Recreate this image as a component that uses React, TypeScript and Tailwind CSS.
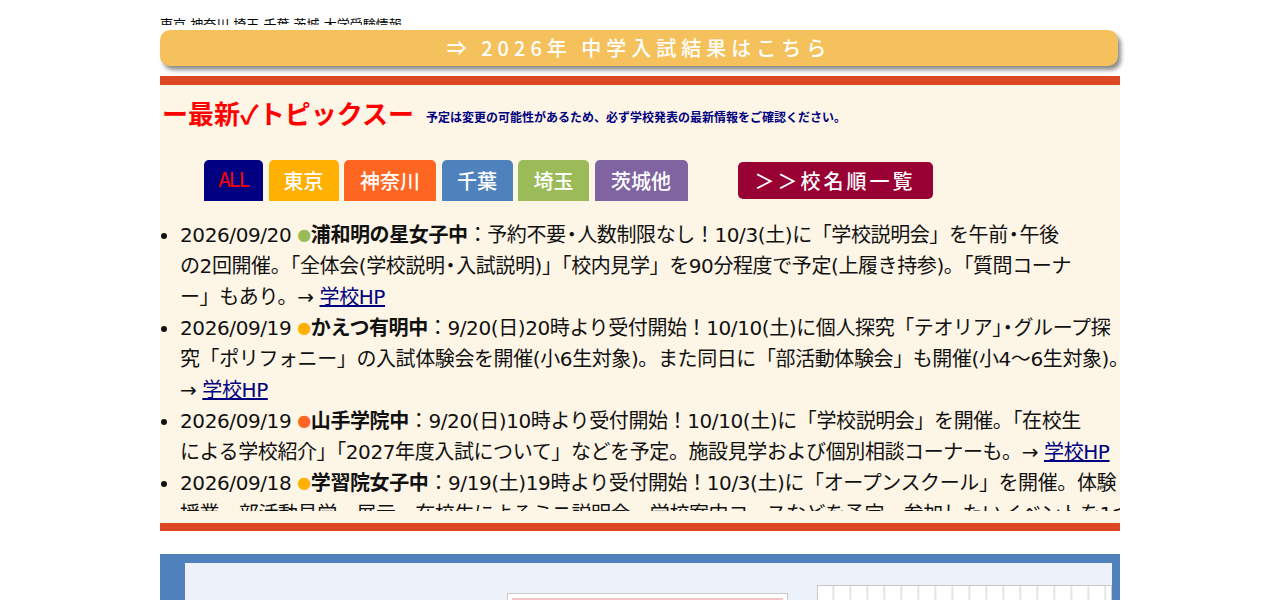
import { Fragment } from "react"

const jp = "font-['Noto_Sans_CJK_JP','Noto_Sans',sans-serif]"
const mixed = "font-['DejaVu_Sans','Noto_Sans_CJK_JP',sans-serif]"

const areas = [
  { label: "ALL", w: "w-[59px]", bg: "bg-[#000080]", text: "text-[#ff0000] font-['Liberation_Mono',monospace] scale-y-110 tracking-[-2px]" },
  { label: "東京", w: "w-[70px]", bg: "bg-[#ffb000]", text: "text-white" },
  { label: "神奈川", w: "w-[92px]", bg: "bg-[#ff6622]", text: "text-white" },
  { label: "千葉", w: "w-[71px]", bg: "bg-[#4f81bd]", text: "text-white" },
  { label: "埼玉", w: "w-[71px]", bg: "bg-[#9bbb59]", text: "text-white" },
  { label: "茨城他", w: "w-[93px]", bg: "bg-[#8064a2]", text: "text-white" },
]

// "\n" marks where the line breaks in the original page
const topics = [
  {
    date: "2026/09/20",
    dot: "text-[#9bbb59]",
    school: "浦和明の星女子中",
    body: "予約不要・人数制限なし！10/3(土)に「学校説明会」を午前・午後\nの2回開催。「全体会(学校説明・入試説明)」「校内見学」を90分程度で予定(上履き持参)。「質問コーナ\nー」もあり。",
  },
  {
    date: "2026/09/19",
    dot: "text-[#ffb000]",
    school: "かえつ有明中",
    body: "9/20(日)20時より受付開始！10/10(土)に個人探究「テオリア」・グループ探\n究「ポリフォニー」の入試体験会を開催(小6生対象)。また同日に「部活動体験会」も開催(小4～6生対象)。\n",
  },
  {
    date: "2026/09/19",
    dot: "text-[#ff6622]",
    school: "山手学院中",
    body: "9/20(日)10時より受付開始！10/10(土)に「学校説明会」を開催。「在校生\nによる学校紹介」「2027年度入試について」などを予定。施設見学および個別相談コーナーも。",
  },
  {
    date: "2026/09/18",
    dot: "text-[#ffb000]",
    school: "学習院女子中",
    body: "9/19(土)19時より受付開始！10/3(土)に「オープンスクール」を開催。体験\n授業、部活動見学、展示、在校生によるミニ説明会、学校案内コースなどを予定。参加したいイベントを1つ\n選んで申し込む。",
  },
  {
    date: "2026/09/18",
    dot: "text-[#9bbb59]",
    school: "淑徳与野中",
    body: "9/19(土)より受付開始！10/17(土)に「学校説明会」を開催。",
  },
]

function Body({ text }: { text: string }) {
  const lines = text.split("\n")
  return (
    <>
      {lines.map((line, i) => (
        <Fragment key={i}>
          {i > 0 && <br />}
          {line.split("・").map((part, j) => (
            <Fragment key={j}>
              {j > 0 && <span className="-mx-[4px]">・</span>}
              {part}
            </Fragment>
          ))}
        </Fragment>
      ))}
    </>
  )
}

export default function App() {
  return (
    <div className={`min-h-screen bg-white ${jp}`}>
      <div className="mx-auto w-[960px]">
        <div className={`h-[25px] overflow-hidden pt-[17px] text-[13px] leading-[15px] text-black ${mixed}`}>
          東京 神奈川 埼玉 千葉 茨城 大学受験情報
        </div>

        <a
          href="#"
          className="mt-[5px] flex h-[36px] w-[958px] items-center justify-center rounded-[10px] bg-[#f5c15c] text-[20px] font-medium tracking-[5px] text-white shadow-[3px_4px_4px_rgba(0,0,0,0.45)]"
        >
          ⇒ 2026年 中学入試結果はこちら
        </a>

        <div className="mt-[10px] border-t-[9px] border-b-[8px] border-[#dc4826] bg-[#fdf5e6] pt-[13px] pb-[12px]">
          <div className="flex items-end pl-[2px]">
            <h2 className="text-[26px] leading-[30px] font-bold text-[#ff0000]">ー最新✓トピックスー</h2>
            <p className="mb-[3px] ml-[12px] text-[12px] leading-[16px] font-bold text-[#000080]">
              予定は変更の可能性があるため、必ず学校発表の最新情報をご確認ください。
            </p>
          </div>

          <div className="mt-[32px] flex items-center pl-[44px]">
            <div className="flex gap-[5.5px]">
              {areas.map((a) => (
                <a
                  key={a.label}
                  href="#"
                  className={`flex h-[41px] items-center justify-center rounded-t-[5px] text-[20px] font-medium ${a.w} ${a.bg}`}
                >
                  <span className={a.text}>{a.label}</span>
                </a>
              ))}
            </div>
            <a
              href="#"
              className="ml-[50px] flex h-[37px] w-[195px] items-center justify-center rounded-[5px] bg-[#990033] text-[20px] font-medium tracking-[3px] text-white"
            >
              ＞＞校名順一覧
            </a>
          </div>

          <div className="mt-[19px] h-[291px] overflow-hidden">
            <ul className={`list-disc pl-[20px] text-[20px] leading-[31px] tracking-[-0.4px] whitespace-nowrap text-[#111] ${mixed}`}>
              {topics.map((t, i) => (
                <li key={i}>
                  {t.date} <span className={`align-[2px] text-[16px] leading-none ${t.dot}`}>●</span>
                  <b>{t.school}</b>：<Body text={t.body} />→{" "}
                  <a href="#" className="text-[#000080] underline">
                    学校HP
                  </a>
                </li>
              ))}
            </ul>
          </div>
        </div>

        <div className="mt-[23px] h-[120px] border-t-[9px] border-r-[8px] border-l-[25px] border-[#4f81bd] bg-[#edf2fa]">
          <div className="flex items-start pt-[22px]">
            <div className="mt-[8px] ml-[322px] h-[80px] w-[281px] border border-[#c8c8c8] bg-white p-[4px]">
              <div className="h-[6px] bg-[#f4c4c4]" />
            </div>
            <div className="ml-[29px] h-[90px] w-[295px] border border-[#c8c8c8] bg-[repeating-linear-gradient(90deg,#ffffff_0px,#ffffff_14px,#dcdcdc_15px,#ffffff_17px)]" />
          </div>
        </div>
      </div>
    </div>
  )
}
